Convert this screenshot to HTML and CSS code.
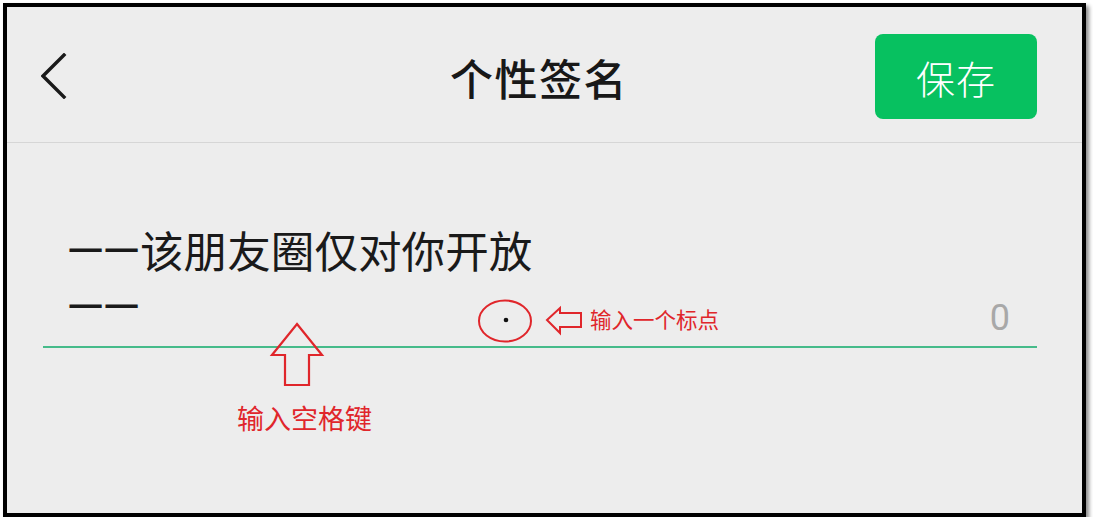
FILE: index.html
```html
<!DOCTYPE html>
<html lang="zh-CN">
<head>
<meta charset="utf-8">
<title>个性签名</title>
<link rel="stylesheet" href="styles.css">
</head>
<body>
<div class="frame">
  <header class="topbar">
    <div class="back">
      <svg width="26" height="46" viewBox="0 0 26 46"><polyline points="23,2 2,23 23,44" fill="none" stroke="#1a1a1a" stroke-width="3.4" stroke-linecap="square"/></svg>
    </div>
    <h1 class="title">个性签名</h1>
    <div class="actions"><button class="save">保存</button></div>
  </header>
  <main class="content">
    <div class="field">
      <div class="text"><span class="dash">一一</span>该朋友圈仅对你开放<br><span class="dash">一一</span></div>
      <div class="count">0</div>
    </div>
  </main>
  <svg class="marks" width="1075" height="506" viewBox="0 0 1075 506">
    <ellipse cx="498" cy="314" rx="26" ry="20.5" fill="none" stroke="#e0262b" stroke-width="2"/>
    <circle cx="499" cy="313" r="2.3" fill="#111"/>
    <polygon points="540,313 553,301 553,306 574,306 574,320 553,320 553,326" fill="none" stroke="#e0262b" stroke-width="2"/>
    <polygon points="290,317 315,348 302,348 302,378 278,378 278,348 265,348" fill="none" stroke="#e0262b" stroke-width="2.2"/>
  </svg>
  <span class="note note-dot">输入一个标点</span>
  <span class="note note-space">输入空格键</span>
</div>
</body>
</html>
```
FILE: styles.css
```css
html, body {
  margin: 0;
  padding: 0;
  background: #ffffff;
}
body {
  font-family: "Noto Sans CJK SC", "Noto Sans", sans-serif;
}
.frame {
  position: relative;
  box-sizing: border-box;
  margin: 3px 0 0 3px;
  width: 1083px;
  height: 514px;
  border: 4px solid #000;
  background: #ededed;
  box-shadow: 3px 3px 4px rgba(0, 0, 0, 0.45);
  display: flex;
  flex-direction: column;
}
.topbar {
  height: 136px;
  box-sizing: border-box;
  border-bottom: 1px solid #d6d6d6;
  display: grid;
  grid-template-columns: 1fr auto 1fr;
  align-items: center;
  padding: 0 45px 0 34px;
}
.back {
  display: flex;
  align-items: center;
  padding-top: 2px;
}
.back svg { display: block; }
.title {
  margin: 4px 0 0 0;
  font-size: 43px;
  font-weight: 500;
  color: #181818;
  letter-spacing: 1.5px;
}
.actions {
  display: flex;
  justify-content: flex-end;
}
.save {
  width: 162px;
  height: 85px;
  margin-top: 4px;
  border: none;
  border-radius: 8px;
  background: #07c160;
  color: #fff;
  font-family: "Noto Sans CJK SC", sans-serif;
  font-size: 39px;
  font-weight: 300;
  letter-spacing: 1px;
  padding: 0;
}
.content {
  padding: 0 45px 0 36px;
}
.field {
  margin-top: 78px;
  border-bottom: 2px solid #46bb8a;
  display: flex;
  align-items: flex-end;
  justify-content: space-between;
  padding: 0 27px 13px 25px;
}
.text {
  font-size: 43.6px;
  line-height: 55px;
  color: #1a1a1a;
}
.dash {
  font-size: 35px;
  font-weight: 500;
  letter-spacing: 1px;
  vertical-align: 4px;
}
.count {
  font-family: "Roboto", sans-serif;
  font-size: 36px;
  line-height: 40px;
  color: #a8a8a8;
  margin-bottom: -5px;
}
.marks {
  position: absolute;
  left: 0;
  top: 0;
  pointer-events: none;
}
.note {
  position: absolute;
  color: #e0262b;
  white-space: nowrap;
}
.note-dot {
  left: 583px;
  top: 297px;
  font-size: 21.5px;
  line-height: 30px;
}
.note-space {
  left: 230px;
  top: 393px;
  font-size: 27px;
  line-height: 36px;
}
```
